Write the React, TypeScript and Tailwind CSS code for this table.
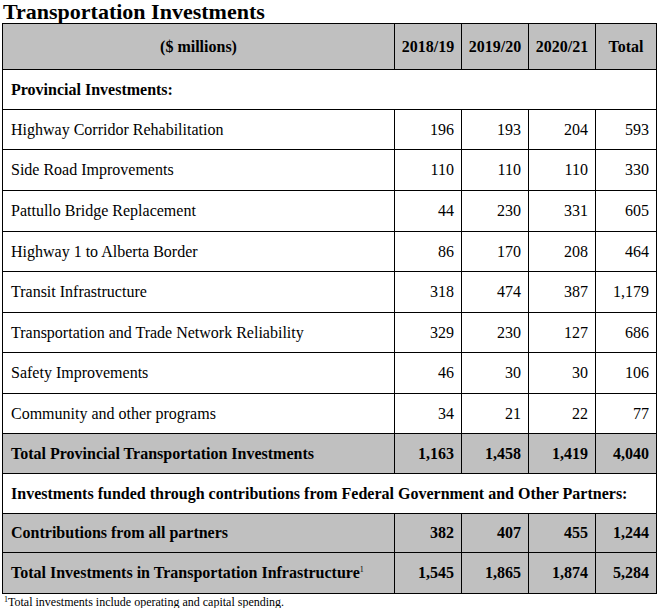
import React from 'react';

type Row = {
  label: string;
  values: string[];
  h: string;
};

const rows: Row[] = [
  { label: 'Highway Corridor Rehabilitation', values: ['196', '193', '204', '593'], h: 'h-[40px]' },
  { label: 'Side Road Improvements', values: ['110', '110', '110', '330'], h: 'h-[41px]' },
  { label: 'Pattullo Bridge Replacement', values: ['44', '230', '331', '605'], h: 'h-[41px]' },
  { label: 'Highway 1 to Alberta Border', values: ['86', '170', '208', '464'], h: 'h-[40px]' },
  { label: 'Transit Infrastructure', values: ['318', '474', '387', '1,179'], h: 'h-[41px]' },
  { label: 'Transportation and Trade Network Reliability', values: ['329', '230', '127', '686'], h: 'h-[40px]' },
  { label: 'Safety Improvements', values: ['46', '30', '30', '106'], h: 'h-[41px]' },
  { label: 'Community and other programs', values: ['34', '21', '22', '77'], h: 'h-[40px]' },
];

const Cells = ({ label, values, sup }: { label: string; values: string[]; sup?: boolean }) => (
  <>
    <div className="w-[392px] flex items-center pl-[8px]">
      {label}
      {sup && <sup className="text-[8px] font-normal relative top-[-3px]">1</sup>}
    </div>
    {values.map((v, i) => (
      <div key={i} className={`${i === 3 ? 'w-[60px]' : 'w-[67px]'} flex items-center justify-end pr-[7px]`}>
        {v}
      </div>
    ))}
  </>
);

export default function App() {
  return (
    <div className="bg-white w-[659px] h-[608px] text-black font-['Liberation_Serif',serif] overflow-hidden">
      <h1 className="text-[22px] font-bold leading-[23px] pl-[3px] h-[23px]">Transportation Investments</h1>
      <div className="ml-[2px] w-[655px] border border-black divide-y divide-black text-[16px]">
        <div className="flex h-[46px] bg-[#c0c0c0] font-bold divide-x divide-black">
          <div className="w-[392px] flex items-center justify-center">($ millions)</div>
          <div className="w-[67px] flex items-center justify-center">2018/19</div>
          <div className="w-[67px] flex items-center justify-center">2019/20</div>
          <div className="w-[67px] flex items-center justify-center">2020/21</div>
          <div className="w-[60px] flex items-center justify-center">Total</div>
        </div>
        <div className="h-[40px] flex items-center pl-[8px] font-bold">Provincial Investments:</div>
        {rows.map((r) => (
          <div key={r.label} className={`flex ${r.h} divide-x divide-black`}>
            <Cells label={r.label} values={r.values} />
          </div>
        ))}
        <div className="flex h-[40px] bg-[#c0c0c0] font-bold divide-x divide-black">
          <Cells label="Total Provincial Transportation Investments" values={['1,163', '1,458', '1,419', '4,040']} />
        </div>
        <div className="h-[40px] flex items-center pl-[8px] font-bold">
          Investments funded through contributions from Federal Government and Other Partners:
        </div>
        <div className="flex h-[39px] bg-[#c0c0c0] font-bold divide-x divide-black">
          <Cells label="Contributions from all partners" values={['382', '407', '455', '1,244']} />
        </div>
        <div className="flex h-[40px] bg-[#c0c0c0] font-bold divide-x divide-black">
          <Cells
            label="Total Investments in Transportation Infrastructure"
            values={['1,545', '1,865', '1,874', '5,284']}
            sup
          />
        </div>
      </div>
      <div className="text-[12px] leading-[15px] pl-[4px] pt-[1px]">
        <sup className="text-[8px]">1</sup>Total investments include operating and capital spending.
      </div>
    </div>
  );
}
